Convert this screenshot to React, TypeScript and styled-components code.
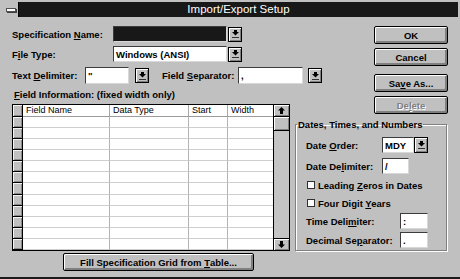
import React from "react";
import styled, { createGlobalStyle } from "styled-components";

const GlobalStyle = createGlobalStyle`
  html, body { margin: 0; padding: 0; background: #c0c0c0; }
  body { font-family: "Liberation Sans", Arial, sans-serif; color: #000; }
  * { box-sizing: border-box; }
`;

const Window = styled.div`
  width: 460px;
  height: 279px;
  background: #c0c0c0;
  padding: 2px 2px 0;
  border-bottom: 2px solid #1a1a1a;
  display: flex;
  flex-direction: column;
  overflow: hidden;
`;

const TitleBar = styled.div`
  height: 15px;
  display: flex;
  background: #181818;
  flex: none;
`;

const SysBox = styled.div`
  width: 17px;
  height: 15px;
  background: #c0c0c0;
  border-right: 1px solid #000;
  display: flex;
  align-items: center;
  justify-content: center;
  padding-left: 2px;
`;

const SysBar = styled.div`
  width: 10px;
  height: 4px;
  background: #fff;
  border: 1px solid #505050;
  box-shadow: 1px 1px 0 #404040;
`;

const Title = styled.div`
  flex: 1;
  color: #fff;
  font-size: 11.5px;
  line-height: 15px;
  text-align: center;
  white-space: nowrap;
`;

const Body = styled.div`
  display: flex;
  gap: 5px;
  padding: 9px 0 0 10px;
`;

const LeftColumn = styled.div`
  width: 278px;
  display: flex;
  flex-direction: column;
  flex: none;
`;

const RightColumn = styled.div`
  width: 153px;
  display: flex;
  flex-direction: column;
  align-items: flex-end;
  flex: none;
`;

const FormRow = styled.div<{ $h: number; $mt?: number }>`
  display: flex;
  align-items: center;
  height: ${(p) => p.$h}px;
  margin-top: ${(p) => p.$mt ?? 0}px;
  flex: none;
  white-space: nowrap;
`;

const Label = styled.span<{ $w?: number; $ml?: number }>`
  font-weight: bold;
  font-size: 9.5px;
  width: ${(p) => (p.$w ? `${p.$w}px` : "auto")};
  margin-left: ${(p) => p.$ml ?? 0}px;
  white-space: nowrap;
  flex: none;
`;

const Key = styled.u`
  text-decoration: underline;
  text-underline-offset: 1px;
`;

const Field = styled.div<{ $w: number; $h: number; $dark?: boolean }>`
  width: ${(p) => p.$w}px;
  height: ${(p) => p.$h}px;
  background: ${(p) => (p.$dark ? "#181818" : "#fff")};
  border: 1px solid;
  border-color: #3c3c3c #d8d8d8 #d8d8d8 #3c3c3c;
  font-weight: bold;
  font-size: 9.5px;
  padding-left: 2px;
  display: flex;
  align-items: center;
  flex: none;
`;

const DropButton = styled.div<{ $ml?: number; $h?: number }>`
  width: 14px;
  height: ${(p) => p.$h ?? 15}px;
  margin-left: ${(p) => p.$ml ?? 1}px;
  background: #c0c0c0;
  border: 1px solid #000;
  box-shadow: inset 1px 1px 0 #fff, inset -1px -1px 0 #808080;
  display: flex;
  align-items: center;
  justify-content: center;
  flex: none;
`;

const PushButton = styled.div<{ $mt?: number; $disabled?: boolean }>`
  width: 74px;
  height: 18px;
  margin-top: ${(p) => p.$mt ?? 0}px;
  background: #c0c0c0;
  border: 1px solid #000;
  border-radius: 2px;
  box-shadow: inset 1px 1px 0 #fff, inset -1px -1px 0 #808080, inset -2px -2px 0 #808080;
  font-weight: bold;
  font-size: 9.5px;
  color: ${(p) => (p.$disabled ? "#808080" : "#000")};
  text-shadow: ${(p) => (p.$disabled ? "1px 1px 0 #fff" : "none")};
  display: flex;
  align-items: center;
  justify-content: center;
  flex: none;
  white-space: nowrap;
`;

const FillButton = styled(PushButton)`
  width: 191px;
  height: 18px;
  margin-left: 51px;
`;

const SectionLabel = styled.div`
  font-weight: bold;
  font-size: 9.5px;
  height: 11px;
  line-height: 11px;
  margin-top: 5px;
  padding-left: 2px;
  white-space: nowrap;
`;

const Table = styled.div`
  margin-top: 4px;
  height: 147px;
  border: 1px solid #000;
  display: flex;
  background: #fff;
  flex: none;
`;

const Cells = styled.div`
  flex: 1;
  display: grid;
  grid-template-columns: 10px 87px 79px 39px 1fr;
  grid-template-rows: 12px repeat(12, 1fr);
`;

const HeaderCell = styled.div<{ $last?: boolean }>`
  font-size: 9px;
  line-height: 11px;
  padding-left: 3px;
  border-right: ${(p) => (p.$last ? "none" : "1px solid #a8a8a8")};
  border-bottom: 1px solid #9c9c9c;
  white-space: nowrap;
  overflow: hidden;
`;

const Cell = styled.div<{ $last?: boolean }>`
  border-right: ${(p) => (p.$last ? "none" : "1px solid #b4b4b4")};
  border-bottom: 1px solid #cfcfcf;
`;

const SelectorCell = styled.div`
  background: #c0c0c0;
  border-right: 1px solid #000;
  border-bottom: 1px solid #000;
  box-shadow: inset 1px 1px 0 #f4f4f4, inset -1px -1px 0 #8c8c8c;
`;

const ScrollBar = styled.div`
  width: 16px;
  border-left: 1px solid #000;
  background: #c4c4c4;
  display: flex;
  flex-direction: column;
  flex: none;
`;

const ScrollButton = styled.div<{ $top?: boolean }>`
  height: 12px;
  background: #c0c0c0;
  border-bottom: ${(p) => (p.$top ? "1px solid #000" : "none")};
  border-top: ${(p) => (p.$top ? "none" : "1px solid #000")};
  box-shadow: inset 1px 1px 0 #fff, inset -1px -1px 0 #808080;
  display: flex;
  align-items: center;
  justify-content: center;
  flex: none;
`;

const Thumb = styled.div`
  height: 14px;
  background: #c0c0c0;
  border-bottom: 1px solid #000;
  box-shadow: inset 1px 1px 0 #fff, inset -1px -1px 0 #808080;
  flex: none;
`;

const Track = styled.div`
  flex: 1;
`;

const Group = styled.fieldset`
  width: 152px;
  height: 132px;
  margin: 5px 1px 0 0;
  padding: 0;
  border: 1px solid #808080;
  box-shadow: 1px 1px 0 #fff, inset 1px 1px 0 #fff;
  min-width: 0;
  align-self: flex-start;
`;

const Legend = styled.legend`
  font-weight: bold;
  font-size: 9.5px;
  line-height: 11px;
  padding: 0 1px;
  margin-left: 1px;
  white-space: nowrap;
`;

const GroupBody = styled.div`
  padding-left: 10px;
  display: flex;
  flex-direction: column;
`;

const CheckBox = styled.div`
  width: 8px;
  height: 8px;
  margin-left: 1px;
  margin-right: 3px;
  background: #fff;
  border: 1px solid #303030;
  flex: none;
`;

const CheckText = styled.span`
  font-weight: bold;
  font-size: 9.5px;
  white-space: nowrap;
`;

const ComboArrow = () => (
  <svg width="7" height="8" viewBox="0 0 7 8" shapeRendering="crispEdges">
    <rect x="2" y="0" width="3" height="2" fill="#000" />
    <path d="M0 2 H7 L3.5 5.5 Z" fill="#000" shapeRendering="auto" />
    <rect x="0" y="7" width="7" height="1" fill="#303030" />
  </svg>
);

const ScrollArrow = ({ up }: { up?: boolean }) => (
  <svg width="7" height="7" viewBox="0 0 7 7" style={{ transform: up ? "none" : "rotate(180deg)" }}>
    <path d="M3.5 0 L7 3.5 H5 V7 H2 V3.5 H0 Z" fill="#000" />
  </svg>
);

const ROWS = 12;

export default function App() {
  const gridCells: React.ReactNode[] = [];
  for (let r = 0; r < ROWS; r++) {
    gridCells.push(<SelectorCell key={`s${r}`} />);
    for (let c = 0; c < 4; c++) {
      gridCells.push(<Cell key={`c${r}-${c}`} $last={c === 3} />);
    }
  }

  return (
    <>
      <GlobalStyle />
      <Window>
        <TitleBar>
          <SysBox>
            <SysBar />
          </SysBox>
          <Title>Import/Export Setup</Title>
        </TitleBar>
        <Body>
          <LeftColumn>
            <FormRow $h={16}>
              <Label $w={101}>
                Specification <Key>N</Key>ame:
              </Label>
              <Field $w={114} $h={16} $dark />
              <DropButton>
                <ComboArrow />
              </DropButton>
            </FormRow>
            <FormRow $h={16} $mt={4}>
              <Label $w={101}>
                F<Key>i</Key>le Type:
              </Label>
              <Field $w={114} $h={16}>
                Windows (ANSI)
              </Field>
              <DropButton>
                <ComboArrow />
              </DropButton>
            </FormRow>
            <FormRow $h={17} $mt={5}>
              <Label $w={73}>
                Text <Key>D</Key>elimiter:
              </Label>
              <Field $w={44} $h={17}>
                "
              </Field>
              <DropButton $ml={6}>
                <ComboArrow />
              </DropButton>
              <Label $w={76} $ml={13}>
                Field <Key>S</Key>eparator:
              </Label>
              <Field $w={65} $h={17}>
                ,
              </Field>
              <DropButton $ml={5}>
                <ComboArrow />
              </DropButton>
            </FormRow>
            <SectionLabel>
              <Key>F</Key>ield Information: (fixed width only)
            </SectionLabel>
            <Table>
              <Cells>
                <SelectorCell />
                <HeaderCell>Field Name</HeaderCell>
                <HeaderCell>Data Type</HeaderCell>
                <HeaderCell>Start</HeaderCell>
                <HeaderCell $last>Width</HeaderCell>
                {gridCells}
              </Cells>
              <ScrollBar>
                <ScrollButton $top>
                  <ScrollArrow up />
                </ScrollButton>
                <Thumb />
                <Track />
                <ScrollButton>
                  <ScrollArrow />
                </ScrollButton>
              </ScrollBar>
            </Table>
            <FillButton $mt={2}>
              Fill Specification Grid from&nbsp;<Key>T</Key>able...
            </FillButton>
          </LeftColumn>
          <RightColumn>
            <PushButton>OK</PushButton>
            <PushButton $mt={4}>Cancel</PushButton>
            <PushButton $mt={8}>
              Sa<Key>v</Key>e As...
            </PushButton>
            <PushButton $mt={4} $disabled>
              De<Key>l</Key>ete
            </PushButton>
            <Group>
              <Legend>Dates, Times, and Numbers</Legend>
              <GroupBody>
                <FormRow $h={16} $mt={7}>
                  <Label $w={76}>
                    Date <Key>O</Key>rder:
                  </Label>
                  <Field $w={32} $h={16}>
                    MDY
                  </Field>
                  <DropButton $ml={0} $h={16}>
                    <ComboArrow />
                  </DropButton>
                </FormRow>
                <FormRow $h={16} $mt={5}>
                  <Label $w={76}>
                    Date De<Key>l</Key>imiter:
                  </Label>
                  <Field $w={27} $h={16}>
                    /
                  </Field>
                </FormRow>
                <FormRow $h={12} $mt={5}>
                  <CheckBox />
                  <CheckText>
                    Leading <Key>Z</Key>eros in Dates
                  </CheckText>
                </FormRow>
                <FormRow $h={12} $mt={6}>
                  <CheckBox />
                  <CheckText>
                    Four Digit <Key>Y</Key>ears
                  </CheckText>
                </FormRow>
                <FormRow $h={16} $mt={4}>
                  <Label $w={94}>
                    Time Deli<Key>m</Key>iter:
                  </Label>
                  <Field $w={28} $h={16}>
                    :
                  </Field>
                </FormRow>
                <FormRow $h={16} $mt={3}>
                  <Label $w={94}>
                    Decimal Se<Key>p</Key>arator:
                  </Label>
                  <Field $w={28} $h={16}>
                    .
                  </Field>
                </FormRow>
              </GroupBody>
            </Group>
          </RightColumn>
        </Body>
      </Window>
    </>
  );
}
